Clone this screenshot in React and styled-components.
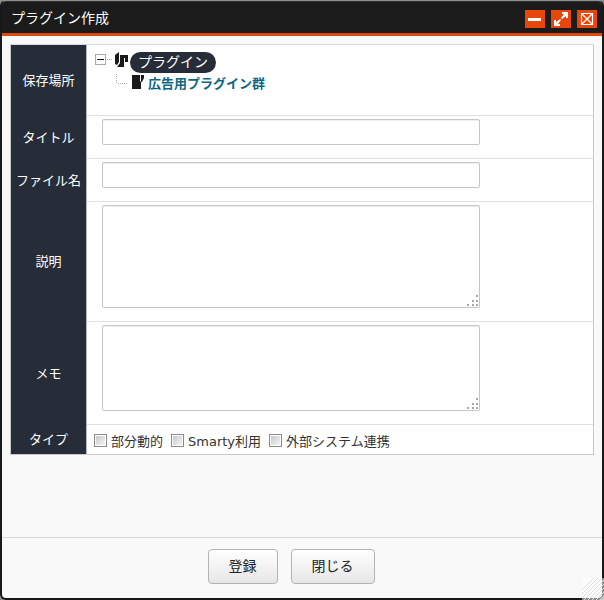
import React, { useState } from 'react';
import styled, { createGlobalStyle } from 'styled-components';

const GlobalStyle = createGlobalStyle`
  * {
    box-sizing: border-box;
  }

  body {
    margin: 0;
    background: #8c8f8c;
    color: #333;
    font-family: "DejaVu Sans", "Noto Sans CJK JP", sans-serif;
    font-size: 13px;
    line-height: 20px;
  }

  button, input, textarea {
    font-family: inherit;
  }
`;

const Window = styled.div`
  position: relative;
  display: flex;
  flex-direction: column;
  min-height: 100vh;
  border: 2px solid #16181a;
  border-top: 1px solid #8c8f8c;
  border-radius: 6px;
  background: #f9f9f9;
`;

const TitleBar = styled.header`
  display: flex;
  align-items: center;
  justify-content: space-between;
  height: 35px;
  padding: 0 5px 0 9px;
  border-top: 1px solid #2c2f2c;
  border-bottom: 3px solid #dc4a12;
  border-radius: 4px 4px 0 0;
  background: #1b1b1b;
`;

const Title = styled.h1`
  margin: 0;
  color: #fff;
  font-size: 14px;
  font-weight: normal;
`;

const WindowButtons = styled.div`
  display: flex;
  gap: 6px;
  padding-top: 3px;
`;

const WindowButton = styled.button`
  display: block;
  width: 20px;
  height: 18px;
  padding: 0;
  border: 0;
  background: #e8470c;
  cursor: pointer;

  svg {
    display: block;
  }
`;

const Form = styled.form`
  display: flex;
  flex: 1;
  flex-direction: column;
`;

const Content = styled.div`
  flex: 1;
  padding: 8px;
`;

const Table = styled.table`
  width: 100%;
  border: 1px solid #c8c8c8;
  border-top-color: #d5dbe0;
  border-spacing: 0;
  background: #fff;
`;

const HeadCell = styled.th`
  width: 76px;
  padding: 2px 0 0;
  border-right: 1px solid #b5b8bc;
  background: #272d38;
  color: #fff;
  font-weight: normal;
  text-align: center;
  white-space: nowrap;
`;

const Cell = styled.td`
  padding: ${(props) => props.$padding || '3px 15px 13px'};
  border-top: ${(props) => (props.$first ? '0' : '1px solid #e0e0e0')};
`;

const TextInput = styled.input`
  display: block;
  width: 378px;
  max-width: 100%;
  height: 26px;
  padding: 2px 6px;
  border: 1px solid #c6c6c6;
  border-radius: 2px;
  background: #fff;
  box-shadow: inset 0 1px 1px #eee;
  font-size: 13px;
`;

const AreaWrap = styled.div`
  position: relative;
  width: 378px;
  max-width: 100%;

  svg {
    position: absolute;
    right: 1px;
    bottom: 1px;
    pointer-events: none;
  }
`;

const TextArea = styled.textarea`
  display: block;
  width: 100%;
  height: ${(props) => props.$height};
  padding: 4px 6px;
  border: 1px solid #c6c6c6;
  border-radius: 2px;
  background: #fff;
  box-shadow: inset 0 1px 1px #eee;
  font-size: 13px;
  resize: none;
`;

const Tree = styled.ul`
  margin: 0;
  padding: 0 0 0 ${(props) => (props.$nested ? '21px' : '0')};
  list-style: none;
`;

const TreeRow = styled.div`
  display: flex;
  align-items: center;
  height: 22px;

  svg {
    display: block;
    flex: none;
  }
`;

const Toggle = styled.button`
  width: 20px;
  height: 22px;
  padding: 0;
  border: 0;
  background: none;
  cursor: pointer;
`;

const Selected = styled.a`
  height: 21px;
  margin-left: 1px;
  padding: 0 8px;
  border-radius: 11px;
  background: #272d38;
  color: #fff;
  font-size: 14px;
  line-height: 21px;
  text-decoration: none;
`;

const TreeLink = styled.a`
  margin-left: 3px;
  color: #0d6782;
  font-weight: bold;
  text-decoration: none;
`;

const Checks = styled.div`
  display: flex;
  flex-wrap: wrap;
  gap: 8px;
`;

const CheckLabel = styled.label`
  display: flex;
  align-items: center;
  gap: 4px;
`;

const CheckBox = styled.input`
  appearance: none;
  width: 13px;
  height: 13px;
  margin: 0 0 3px;
  border: 1px solid #8b8b8b;
  background: linear-gradient(135deg, #c6cbce, #f4f4f4) content-box #f4f4f4;
  padding: 1px;

  &:checked {
    background: #272d38 content-box;
  }
`;

const Footer = styled.footer`
  display: flex;
  align-items: flex-start;
  justify-content: center;
  gap: 13px;
  padding: 11px 22px 14px 0;
  border-top: 1px solid #d9d9d9;
`;

const Button = styled.button`
  height: 35px;
  padding: 0 20px 3px;
  border: 1px solid #b3b3b3;
  border-radius: 4px;
  background: linear-gradient(#fff, #e6e6e6);
  color: #222;
  font-size: 14px;
  cursor: pointer;
`;

const Corner = styled.svg`
  position: absolute;
  right: -2px;
  bottom: -2px;
`;

const MinimizeIcon = () => (
  <svg width="20" height="18" viewBox="0 0 20 18">
    <rect x="3" y="8" width="13" height="3" fill="#fff" />
  </svg>
);

const ExpandIcon = () => (
  <svg width="20" height="18" viewBox="0 0 20 18">
    <path d="M11 2h6v6h-2V6l-4 3-1-1 3-4h-2z" fill="#fff" />
    <path d="M9 16H3v-6h2v2l4-3 1 1-3 4h2z" fill="#fff" />
  </svg>
);

const CloseIcon = () => (
  <svg width="20" height="18" viewBox="0 0 20 18">
    <path d="M4.5 3.5h11v11h-11zM5 4l10 10M15 4L5 14" fill="none" stroke="#fff" strokeWidth="1.2" />
  </svg>
);

const ToggleIcon = ({ open }) => (
  <svg width="20" height="22" viewBox="0 0 20 22">
    <rect x="1.5" y="3.5" width="10" height="10" fill="#fff" stroke="#a9a9a9" />
    <path d="M3 8.5h7" stroke="#111" />
    {!open && <path d="M6.5 5v7" stroke="#111" />}
    <path d="M13 8.5h5" stroke="#aaa" strokeDasharray="1 1" />
  </svg>
);

const FolderIcon = () => (
  <svg width="15" height="22" viewBox="0 0 15 22">
    <path d="M1 4l4-3v10l-2 3-2-1z" fill="#1a1a1a" />
    <path d="M6 4h8v7h-3V7h-1v9H3l3-4z" fill="#1a1a1a" />
  </svg>
);

const BranchIcon = () => (
  <svg width="16" height="22" viewBox="0 0 16 22">
    <path d="M1.5 1v10M3 10.5h9" fill="none" stroke="#aaa" strokeDasharray="1 1" />
  </svg>
);

const FileIcon = () => (
  <svg width="14" height="22" viewBox="0 0 14 22">
    <path d="M1 2h8v6l1 1v7H1z" fill="#1a1a1a" />
    <path d="M10 2h3v3l-2 4h-1z" fill="#1a1a1a" />
  </svg>
);

const Grip = () => (
  <svg width="12" height="12" viewBox="0 0 12 12" fill="#a8a8a8">
    <rect x="9" y="0" width="2" height="2" />
    <rect x="5" y="5" width="2" height="2" />
    <rect x="9" y="5" width="2" height="2" />
    <rect x="0" y="9" width="2" height="2" />
    <rect x="5" y="9" width="2" height="2" />
    <rect x="9" y="9" width="2" height="2" />
  </svg>
);

const TYPES = [
  { name: 'partial', label: '部分動的' },
  { name: 'smarty', label: 'Smarty利用' },
  { name: 'external', label: '外部システム連携' }
];

const AreaField = ({ id, height }) => (
  <AreaWrap>
    <TextArea id={id} name={id} $height={height} />
    <Grip />
  </AreaWrap>
);

const PluginTree = () => {
  const [open, setOpen] = useState(true);

  return (
    <Tree>
      <li>
        <TreeRow>
          <Toggle type="button" aria-label="開閉" aria-expanded={open} onClick={() => setOpen(!open)}>
            <ToggleIcon open={open} />
          </Toggle>
          <FolderIcon />
          <Selected href="#plugin">プラグイン</Selected>
        </TreeRow>
        {open && (
          <Tree $nested>
            <li>
              <TreeRow>
                <BranchIcon />
                <FileIcon />
                <TreeLink href="#ad">広告用プラグイン群</TreeLink>
              </TreeRow>
            </li>
          </Tree>
        )}
      </li>
    </Tree>
  );
};

const App = () => (
  <>
    <GlobalStyle />
    <Window>
      <TitleBar>
        <Title>プラグイン作成</Title>
        <WindowButtons>
          <WindowButton type="button" aria-label="最小化"><MinimizeIcon /></WindowButton>
          <WindowButton type="button" aria-label="最大化"><ExpandIcon /></WindowButton>
          <WindowButton type="button" aria-label="閉じる"><CloseIcon /></WindowButton>
        </WindowButtons>
      </TitleBar>
      <Form onSubmit={(e) => e.preventDefault()}>
        <Content>
          <Table>
            <tbody>
              <tr>
                <HeadCell scope="row">保存場所</HeadCell>
                <Cell $first $padding="6px 7px 20px"><PluginTree /></Cell>
              </tr>
              <tr>
                <HeadCell scope="row"><label htmlFor="title">タイトル</label></HeadCell>
                <Cell><TextInput id="title" name="title" type="text" /></Cell>
              </tr>
              <tr>
                <HeadCell scope="row"><label htmlFor="filename">ファイル名</label></HeadCell>
                <Cell><TextInput id="filename" name="filename" type="text" /></Cell>
              </tr>
              <tr>
                <HeadCell scope="row"><label htmlFor="description">説明</label></HeadCell>
                <Cell><AreaField id="description" height="103px" /></Cell>
              </tr>
              <tr>
                <HeadCell scope="row"><label htmlFor="memo">メモ</label></HeadCell>
                <Cell><AreaField id="memo" height="86px" /></Cell>
              </tr>
              <tr>
                <HeadCell scope="row">タイプ</HeadCell>
                <Cell $padding="7px 7px 2px">
                  <Checks>
                    {TYPES.map((type) => (
                      <CheckLabel key={type.name}>
                        <CheckBox type="checkbox" name={type.name} />
                        {type.label}
                      </CheckLabel>
                    ))}
                  </Checks>
                </Cell>
              </tr>
            </tbody>
          </Table>
        </Content>
        <Footer>
          <Button type="submit">登録</Button>
          <Button type="button">閉じる</Button>
        </Footer>
      </Form>
      <Corner width="22" height="22" viewBox="0 0 22 22">
        <rect width="22" height="22" fill="#fff" fillOpacity="0.5" />
        <path
          d="M2 22L22 2M6 22L22 6M10 22L22 10M14 22L22 14M18 22L22 18M0 20L20 0M0 16L16 0M0 12L12 0"
          stroke="#dedede"
          strokeWidth="1"
        />
      </Corner>
    </Window>
  </>
);

export default App;
